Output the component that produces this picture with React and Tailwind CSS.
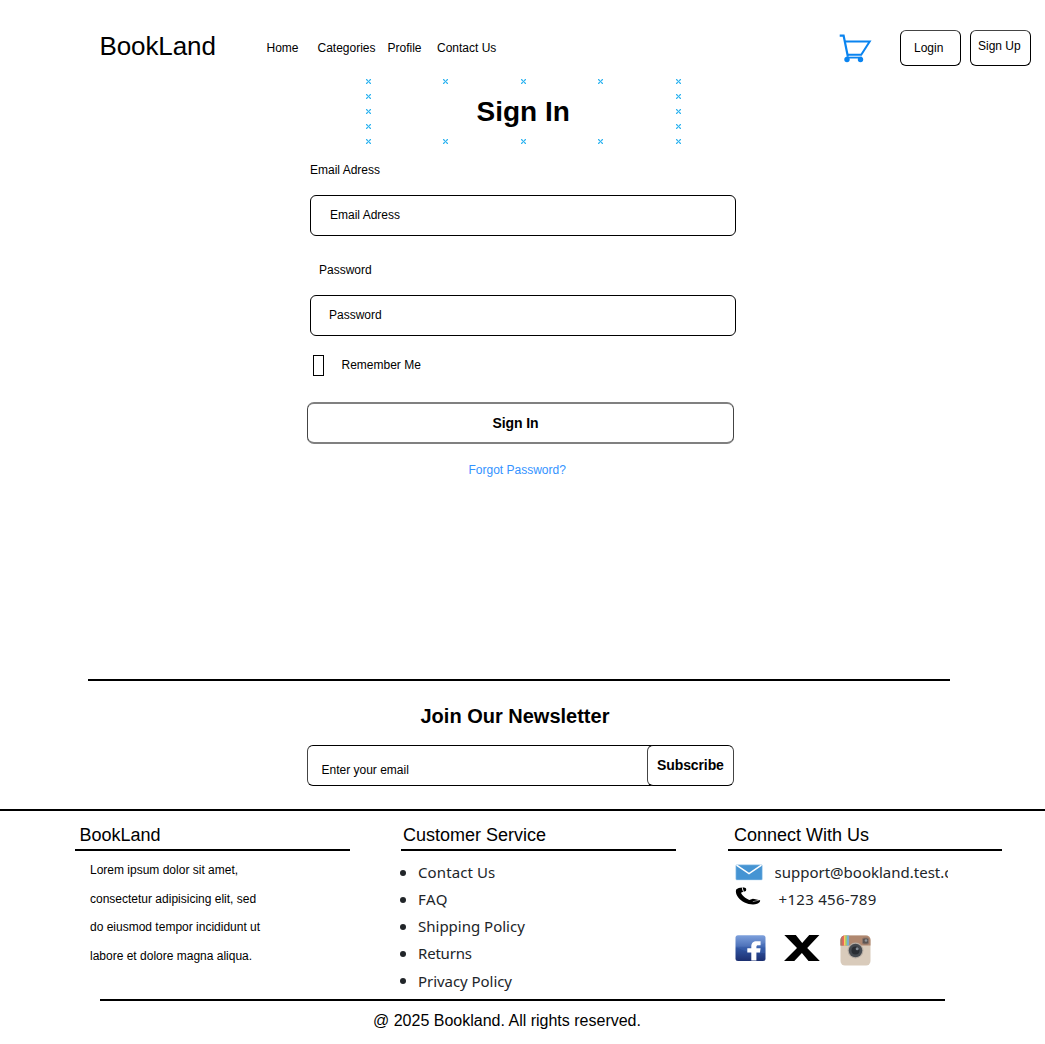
import React from "react";

const MARKS = [0, 1, 2, 3, 4];

function Mark() {
  return (
    <svg width="5" height="5" viewBox="0 0 5 5" shapeRendering="crispEdges" fill="#2fb4f0" className="block shrink-0">
      <path d="M0 0h1v1h-1zM4 0h1v1h-1zM1 1h1v1h-1zM3 1h1v1h-1zM2 2h1v1h-1zM1 3h1v1h-1zM3 3h1v1h-1zM0 4h1v1h-1zM4 4h1v1h-1z" />
      <path opacity=".4" d="M1 0h1v1h-1zM3 0h1v1h-1zM0 1h1v1h-1zM2 1h1v1h-1zM4 1h1v1h-1zM1 2h1v1h-1zM3 2h1v1h-1zM0 3h1v1h-1zM2 3h1v1h-1zM4 3h1v1h-1zM1 4h1v1h-1zM3 4h1v1h-1z" />
    </svg>
  );
}

function MarkRow() {
  return (
    <div className="flex">
      <Mark />
      <div className="ml-[72px]"><Mark /></div>
      <div className="ml-[73px]"><Mark /></div>
      <div className="ml-[72px]"><Mark /></div>
      <div className="ml-[73px]"><Mark /></div>
    </div>
  );
}

function SelectionMarks() {
  return (
    <div className="absolute left-[366px] top-[4px] flex h-[65px] w-[315px] flex-col justify-between">
      {MARKS.map((row) =>
        row === 0 || row === 4 ? (
          <MarkRow key={row} />
        ) : (
          <div key={row} className="flex justify-between">
            <Mark />
            <Mark />
          </div>
        )
      )}
    </div>
  );
}

function CartIcon() {
  return (
    <svg width="34" height="30" viewBox="0 0 34 30" fill="none" stroke="#0a84f0" className="mt-[34px] ml-[342.5px] shrink-0">
      <path d="M.7 1.600h3.900l4.300 21.200" strokeWidth="2.200" />
      <path d="M5.800 7.500h24.900L22.200 20.800H8" strokeWidth="2" />
      <path d="M7.500 23.600h15.500" strokeWidth="1.800" />
      <circle cx="8" cy="25.500" r="2.700" fill="#0a84f0" stroke="none" />
      <circle cx="21.500" cy="25.500" r="2.700" fill="#0a84f0" stroke="none" />
    </svg>
  );
}

function Header() {
  return (
    <header className="flex h-[75px] items-start">
      <div className="ml-[99.5px] mt-[31px] w-[167px] text-[26px] leading-[30px] tracking-[-0.1px]">BookLand</div>
      <nav className="mt-[40px] flex w-[230px] whitespace-nowrap text-xs leading-4">
        <a className="w-[51px]">Home</a>
        <a className="w-[70px]">Categories</a>
        <a className="w-[49.5px]">Profile</a>
        <a>Contact Us</a>
      </nav>
      <CartIcon />
      <button className="ml-[27px] mt-[30px] flex h-[36px] w-[61px] items-start rounded-md border border-black border-t-[#444] pl-[13px] pt-[9px] text-xs leading-4">
        Login
      </button>
      <button className="ml-[9px] mt-[30px] flex h-[36px] w-[61px] items-start whitespace-nowrap rounded-md border border-black border-t-[#444] pl-[7px] pt-[7px] text-xs leading-4">
        Sign Up
      </button>
    </header>
  );
}

function SignInForm() {
  return (
    <main className="relative h-[604px] pt-[21px]">
      <SelectionMarks />
      <h1 className="ml-[476.5px] text-[28px] font-bold leading-8">Sign In</h1>
      <form className="ml-[310px] mt-[34px] flex w-[426px] flex-col text-xs leading-4">
        <label>Email Adress</label>
        <div className="mt-[17px] h-[41px] rounded-md border border-black pl-[19px] pt-[11px]">Email Adress</div>
        <label className="ml-[9px] mt-[26px]">Password</label>
        <div className="mt-[17px] h-[41px] rounded-md border border-black pl-[18px] pt-[11px]">Password</div>
        <div className="ml-[3px] mt-[19px] flex h-[21px]">
          <span className="h-[21px] w-[11px] border border-black" />
          <span className="ml-[17.5px] mt-[2px]">Remember Me</span>
        </div>
        <div className="-ml-[3px] mt-[26px] h-[42px] w-[427px] rounded-[7px] border border-x-[#444] border-y-2 border-y-[#808080] pl-[184.5px] pt-[11px] text-sm font-bold leading-4 tracking-[-0.1px]">
          Sign In
        </div>
        <a className="ml-[158.5px] mt-[18px] text-[#3393ff]">Forgot Password?</a>
      </form>
    </main>
  );
}

function Newsletter() {
  return (
    <section className="h-[130px]">
      <div className="ml-[88px] h-[2px] w-[862px] bg-black" />
      <h2 className="ml-[420.5px] mt-[23px] text-xl font-bold leading-6">Join Our Newsletter</h2>
      <div className="ml-[307px] mt-[17px] flex h-[41px] w-[427px]">
        <div className="-mr-[6px] w-[346px] rounded-l-md border border-r-0 border-black border-l-[#444] pl-[13.5px] pt-[16px] text-xs leading-4">
          Enter your email
        </div>
        <button className="flex w-[87px] items-start rounded-md border border-black border-x-[#444] bg-white pl-[9px] pt-[11px] text-sm font-bold leading-4 tracking-[-0.1px]">
          Subscribe
        </button>
      </div>
    </section>
  );
}

function Heading({ children }) {
  return <h3 className="h-[40px] border-b-2 border-black pt-[14px] text-lg leading-5">{children}</h3>;
}

function MailIcon() {
  return (
    <svg width="28" height="17" viewBox="0 0 28 17" className="block">
      <rect x="0.8" y="0.8" width="26.500" height="15.200" rx="1" fill="#4594d3" stroke="#b9d9f0" strokeWidth=".5" />
      <path d="M1.500 1.200L14 9.600 26.500 1.200" fill="none" stroke="#fff" strokeWidth="1.500" />
    </svg>
  );
}

function PhoneIcon() {
  return (
    <svg width="26" height="18" viewBox="0 0 26 18" className="block">
      <path d="M1.200 2.400C2.400 1.100 5 .4 6.800.4l1.300 4.300-2.100 1.100c.9 2.600 4.500 5.900 8.300 7.100l3.600-1.100 7.200 1.500c.3 1.300-1.300 2.900-3 3.500-3.300 1.100-8.700.6-12.500-1.300C3.600 12.500-.3 6.800 1.200 2.400z" />
      <path d="M7.500.3l2.400.4c1 .4 1.400 1.200 1.300 2.200l-.4 1.200-2.100.6z" />
      <path d="M17.800 14.700l6.600-1.700M8.200 3.900L7.100.3" stroke="#fff" strokeWidth=".5" />
    </svg>
  );
}

function FacebookIcon() {
  return (
    <svg width="31" height="27" viewBox="0 0 31 27" className="block">
      <defs>
        <linearGradient id="fb" x1="0" y1="0" x2="0" y2="1">
          <stop offset="0" stopColor="#7da0dc" />
          <stop offset=".42" stopColor="#4f73ba" />
          <stop offset=".5" stopColor="#3156a3" />
          <stop offset="1" stopColor="#1c2f70" />
        </linearGradient>
      </defs>
      <rect x=".5" y=".3" width="30" height="25.700" rx="2.500" fill="url(#fb)" />
      <path d="M1 12c8 1.500 20 1 29-4v10c-9 1-20-1-29-6z" fill="#4068b4" opacity=".45" />
      <path d="M16.300 25.500v-8h-4v-4.200h4v-1.600c0-3.700 2-5.400 5.300-5.400h4v4h-2.500c-1.300 0-1.700.6-1.700 1.700v1.300h4.200l-.6 4.200h-3.600v8z" fill="#fff" />
    </svg>
  );
}

function XIcon() {
  return (
    <svg width="36" height="26" viewBox="0 0 36 26" className="block">
      <path d="M.3 0h11.500l6.400 8L25.200 0h10.200L23.200 12.900 35.800 26H24.500l-6.600-8L10.300 26H0l13-13z" />
    </svg>
  );
}

function InstagramIcon() {
  return (
    <svg width="31" height="31" viewBox="0 0 31 31" className="block">
      <defs>
        <clipPath id="cam">
          <rect x=".5" y=".5" width="30" height="30" rx="4.500" />
        </clipPath>
      </defs>
      <g clipPath="url(#cam)">
        <rect width="31" height="31" fill="#d9cbbb" />
        <rect width="31" height="10.500" fill="#b08870" />
        <rect width="3" height="10.500" fill="#ad7964" />
        <rect x="2.500" width="1.500" height="10.500" fill="#ef655d" />
        <rect x="4" width="1.700" height="10.500" fill="#f7cf5c" />
        <rect x="5.700" width="1.500" height="10.500" fill="#8fd07a" />
        <rect x="7.200" width="1.600" height="10.500" fill="#6fb6e8" />
      </g>
      <rect x="22.500" y="3" width="6" height="6" rx="1.500" fill="#5d5552" stroke="#8b7469" />
      <circle cx="26" cy="5.500" r="1.300" fill="#90969c" />
      <circle cx="15.500" cy="15.500" r="7.900" fill="#b7ada3" />
      <circle cx="15.500" cy="15.500" r="6.800" fill="#454a50" />
      <circle cx="15.500" cy="15.500" r="4" fill="#292d33" />
      <circle cx="17.200" cy="13.700" r="1.500" fill="#828b94" />
    </svg>
  );
}

const LINKS = [
  ["Contact Us", "tracking-[0.1px]"],
  ["FAQ", "tracking-[0.5px]"],
  ["Shipping Policy", "tracking-[0px]"],
  ["Returns", "tracking-[-0.2px]"],
  ["Privacy Policy", "tracking-[-0.05px]"],
];

function Footer() {
  return (
    <footer className="h-[235px] border-t-2 border-black">
      <div className="ml-[75px] flex h-[188px]">
        <section className="w-[275px]">
          <Heading><span className="ml-[4.500px]">BookLand</span></Heading>
          <p className="ml-[15px] mt-[5px] text-xs leading-[28.7px]">
            Lorem ipsum dolor sit amet,<br />
            consectetur adipisicing elit, sed<br />
            do eiusmod tempor incididunt ut<br />
            labore et dolore magna aliqua.
          </p>
        </section>
        <section className="ml-[51px] w-[275px]">
          <Heading><span className="ml-[2px]">Customer Service</span></Heading>
          <ul className="mt-[8px] font-['Noto_Sans'] text-[15px] leading-[27.150px] text-[#212529]">
            {LINKS.map(([label, tracking]) => (
              <li key={label} className="flex items-center">
                <span className="-ml-[1px] mr-[12px] h-[6px] w-[6px] rounded-full bg-[#212529]" />
                <span className={tracking}>{label}</span>
              </li>
            ))}
          </ul>
        </section>
        <section className="ml-[52px] w-[274px]">
          <Heading><span className="ml-[6px]">Connect With Us</span></Heading>
          <div className="ml-[7px] mt-[8px] font-['Noto_Sans'] text-[15px] leading-[27px] text-[#212529]">
            <div className="flex h-[27px]">
              <div className="mt-[5px] w-[39.5px]"><MailIcon /></div>
              <div className="w-[173.5px] overflow-hidden whitespace-nowrap">support@bookland.test.com</div>
            </div>
            <div className="flex h-[27px]">
              <div className="mt-[1px] w-[43.5px]"><PhoneIcon /></div>
              <div className="tracking-[0.3px]">+123 456-789</div>
            </div>
          </div>
          <div className="ml-[7px] mt-[22px] flex items-start">
            <FacebookIcon />
            <div className="ml-[18px]"><XIcon /></div>
            <div className="ml-[20px]"><InstagramIcon /></div>
          </div>
        </section>
      </div>
      <div className="ml-[100px] h-[2px] w-[845px] bg-black" />
      <p className="ml-[373px] mt-[10px] text-base leading-5">@ 2025 Bookland. All rights reserved.</p>
    </footer>
  );
}

export default function App() {
  return (
    <div className="h-[1044px] w-[1045px] overflow-hidden bg-white font-['Liberation_Sans',Arial,sans-serif] text-black">
      <Header />
      <SignInForm />
      <Newsletter />
      <Footer />
    </div>
  );
}
